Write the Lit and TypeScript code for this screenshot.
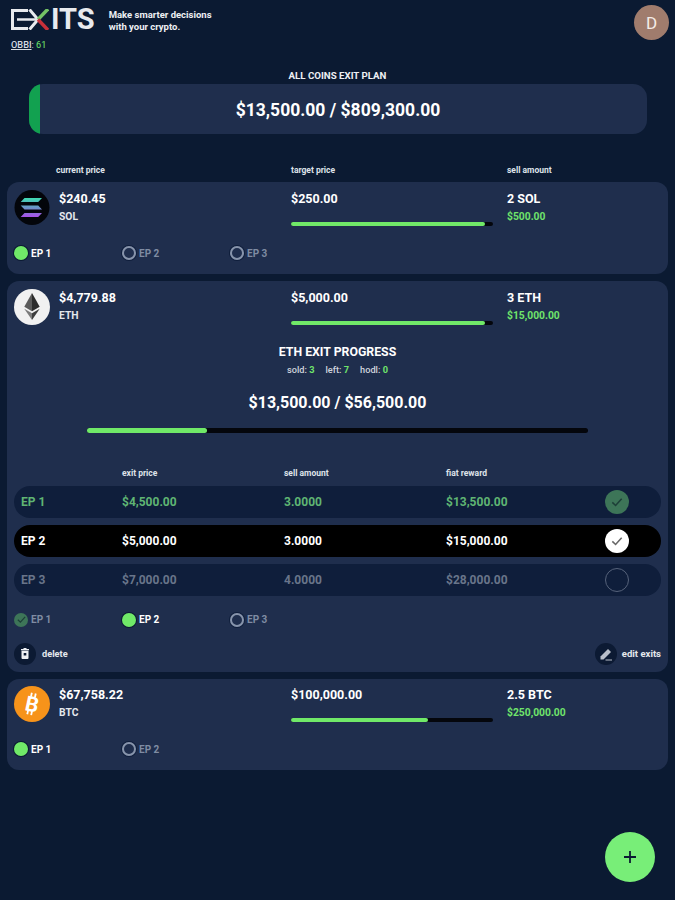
import { LitElement, html, css, svg } from 'lit';
import { customElement } from 'lit/decorators.js';

type Pick = { label: string; state: 'on' | 'off' | 'done' };
type Coin = {
  icon: 'sol' | 'eth' | 'btc';
  price: string;
  symbol: string;
  target: string;
  amount: string;
  reward: string;
  progress: number;
  picks: Pick[];
};

const sol: Coin = {
  icon: 'sol', price: '$240.45', symbol: 'SOL', target: '$250.00', amount: '2 SOL', reward: '$500.00', progress: 96,
  picks: [{ label: 'EP 1', state: 'on' }, { label: 'EP 2', state: 'off' }, { label: 'EP 3', state: 'off' }],
};
const eth: Coin = {
  icon: 'eth', price: '$4,779.88', symbol: 'ETH', target: '$5,000.00', amount: '3 ETH', reward: '$15,000.00', progress: 96,
  picks: [{ label: 'EP 1', state: 'done' }, { label: 'EP 2', state: 'on' }, { label: 'EP 3', state: 'off' }],
};
const btc: Coin = {
  icon: 'btc', price: '$67,758.22', symbol: 'BTC', target: '$100,000.00', amount: '2.5 BTC', reward: '$250,000.00', progress: 68,
  picks: [{ label: 'EP 1', state: 'on' }, { label: 'EP 2', state: 'off' }],
};

const exits = [
  { cls: 'sold', ep: 'EP 1', price: '$4,500.00', amount: '3.0000', reward: '$13,500.00' },
  { cls: 'current', ep: 'EP 2', price: '$5,000.00', amount: '3.0000', reward: '$15,000.00' },
  { cls: 'future', ep: 'EP 3', price: '$7,000.00', amount: '4.0000', reward: '$28,000.00' },
];

const coinIcons = {
  sol: svg`<svg viewBox="0 0 36 36" width="36" height="36">
    <defs><linearGradient id="sg" gradientUnits="userSpaceOnUse" x1="0" y1="8" x2="0" y2="28">
      <stop offset="0" stop-color="#3fdcb2"/><stop offset=".5" stop-color="#6d90c8"/><stop offset="1" stop-color="#b048ec"/></linearGradient></defs>
    <circle cx="18" cy="17.500" r="17.500" fill="#03050a"/>
    <path fill="url(#sg)" d="M10.500 8h17.500l-3.800 4h-17.500zM6.700 15.500h17.500l3.800 4h-17.500zM10.500 23h17.500l-3.800 4h-17.500z"/>
  </svg>`,
  eth: svg`<svg viewBox="0 0 36 36" width="36" height="36">
    <circle cx="18" cy="18" r="18" fill="#f1f1f1"/>
    <path fill="#5b5b5b" d="M18 4 10.300 17.800 18 22.300z"/>
    <path fill="#2c2c2c" d="M18 4 25.700 17.800 18 22.300z"/>
    <path fill="#7b7b7b" d="M10.300 19.800 18 31V24.300z"/>
    <path fill="#3d3d3d" d="M25.700 19.800 18 31V24.300z"/>
  </svg>`,
  btc: svg`<svg viewBox="0 0 36 36" width="36" height="36">
    <circle cx="18" cy="18" r="18" fill="#f7931a"/>
    <g transform="rotate(12 18 18)">
      <path stroke="#fff" stroke-width="1.800" d="M15.500 7v4M19.500 7v4M15.500 25v4M19.500 25v4"/>
      <text x="18" y="25.500" text-anchor="middle" class="btc-b">B</text>
    </g>
  </svg>`,
};

const check = (color: string, size = 12) => html`<svg viewBox="0 0 12 12" width=${size} height=${size}>
  <path d="M2 6.300 4.800 9 10 3.200" fill="none" stroke=${color} stroke-width="1.300"/></svg>`;

@customElement('app-root')
export class AppRoot extends LitElement {
  static styles = css`
    :host {
      display: block;
      position: relative;
      width: 675px;
      min-height: 900px;
      background: #0b1a32;
      color: #fff;
      font-family: Roboto, 'Liberation Sans', sans-serif;
      overflow: hidden;
    }

    .header { display: flex; justify-content: space-between; height: 69px; padding: 4px 6px 0 11px; box-sizing: border-box; }
    .brand-top { display: flex; align-items: flex-start; gap: 14px; height: 29px; }
    .logo { display: flex; align-items: center; gap: 2px; height: 31px; color: #e8eaee; }
    .logo svg { display: block; }
    .logo span { font-size: 29px; font-weight: 700; line-height: 31px; }
    .tag { font-size: 9.500px; font-weight: 700; line-height: 11.500px; margin-top: 5px; color: #eef0f4; }
    .obbi { font-size: 9.200px; margin-top: 6px; color: #d7dbe2; }
    .obbi u { font-weight: 500; }
    .green { color: #6fe46b; }
    .avatar { width: 35px; height: 35px; margin-top: 1px; border-radius: 50%; background: #a07c6d; color: #f4ece8; font-size: 17px; display: flex; align-items: center; justify-content: center; }

    .plan-title { text-align: center; font-size: 9.700px; font-weight: 700; line-height: 14px; color: #eef0f4; margin-bottom: 1px; }
    .plan { height: 50px; margin: 0 28px 0 29px; border-radius: 14px; background: #1f2e4d; overflow: hidden; display: flex; align-items: center; }
    .plan-edge { width: 11px; height: 100%; background: #12a150; flex: none; }
    .plan-sum { flex: 1; text-align: center; font-size: 17.500px; font-weight: 700; padding: 2px 11px 0 0; }

    .columns { display: flex; margin-top: 30px; padding-left: 56px; height: 12px; font-size: 8.500px; font-weight: 700; line-height: 12px; color: #dfe3ea; }
    .columns span:nth-child(1) { width: 235px; }
    .columns span:nth-child(2) { width: 216px; }

    .cards { display: flex; flex-direction: column; gap: 7px; margin: 6px 7px 0; }
    .card { background: #1f2e4d; border-radius: 12px; padding: 8px 7px 11px; }
    .card.full { padding-bottom: 7px; margin-bottom: 0.500px; }
    .card.tight { padding: 7px 7px 11px; }
    .top { display: grid; grid-template-columns: 45px 232px 216px 1fr; height: 40px; }
    .icon { width: 36px; height: 36px; }
    .icon svg { display: block; }
    .btc-b { font-size: 21px; font-weight: 700; fill: #fff; }
    .val { font-size: 12.500px; font-weight: 700; line-height: 18px; }
    .sub { font-size: 10.300px; font-weight: 700; line-height: 18px; color: #e4e7ec; }
    .sub.green { color: #6fe46b; }
    .bar { height: 4px; border-radius: 2px; background: #04060c; width: 202px; margin-top: 14px; }
    .bar > div { height: 100%; border-radius: 2px; background: #70e968; }

    .picks { display: grid; grid-template-columns: repeat(3, 108px); margin-top: 13px; height: 20px; align-items: center; }
    .pick { display: flex; align-items: center; gap: 3px; font-size: 10px; font-weight: 700; color: #7f8ca3; }
    .dot { width: 14px; height: 14px; border-radius: 50%; box-sizing: border-box; display: flex; align-items: center; justify-content: center; flex: none; }
    .pick.on { color: #fff; }
    .pick.on .dot { background: #70e968; box-shadow: 0 0 0 1px #0b1a32; }
    .pick.off .dot { border: 2px solid #8794ab; box-shadow: 0 0 0 1px #0f1e3b; }
    .pick.done .dot { background: #3d7558; }

    .detail { text-align: center; padding-top: 12.500px; }
    .detail h2 { margin: 0; font-size: 12.300px; font-weight: 700; line-height: 20px; }
    .stats { display: flex; justify-content: center; gap: 11px; font-size: 9.200px; font-weight: 500; color: #cfd4dd; line-height: 14px; margin-top: 1px; }
    .total { font-size: 16px; font-weight: 700; line-height: 22px; margin-top: 15px; }
    .total-bar { height: 5px; width: 501px; margin: 14px 0 0 73px; background: #04060c; border-radius: 3px; }
    .total-bar > div { height: 100%; background: #70e968; border-radius: 3px; }

    .table { margin-top: 34px; text-align: left; }
    .grid { display: grid; align-items: center; }
    .thead { grid-template-columns: 108px 162px 162px 1fr; height: 12px; font-size: 8.500px; font-weight: 700; color: #dfe3ea; }
    .rows { display: flex; flex-direction: column; gap: 7px; margin-top: 7px; }
    .row { grid-template-columns: 101px 162px 162px 1fr 60px; height: 32px; border-radius: 16px; padding-left: 7px; font-size: 12px; font-weight: 700; background: #0f1e3b; }
    .row.sold { color: #5fb573; }
    .row.current { background: #000; color: #fff; }
    .row.future { color: #69758a; }
    .mark { width: 24px; height: 24px; border-radius: 50%; box-sizing: border-box; display: flex; align-items: center; justify-content: center; margin-left: 4px; }
    .sold .mark { background: #3d7558; }
    .current .mark { background: #fff; }
    .future .mark { border: 1px solid #56627a; }

    .detail-picks { margin-top: 14px; }
    .actions { display: flex; justify-content: space-between; margin-top: 13px; }
    .action { display: flex; align-items: center; gap: 6px; font-size: 9.200px; font-weight: 700; color: #e6e9ee; }
    .action + .action { font-size: 9.500px; gap: 5px; }
    .round { width: 22px; height: 22px; border-radius: 50%; background: #0c1a33; display: flex; align-items: center; justify-content: center; }
    .round svg { display: block; }

    .fab { position: absolute; left: 605px; top: 832px; width: 50px; height: 50px; border-radius: 50%; background: #78ee78; display: flex; align-items: center; justify-content: center; }
  `;

  renderPicks(picks: Pick[], extra = '') {
    return html`<div class="picks ${extra}">
      ${picks.map(p => html`<div class="pick ${p.state}">
        <div class="dot">${p.state === 'done' ? check('#1d3f38', 11) : ''}</div>${p.label}
      </div>`)}
    </div>`;
  }

  renderTop(c: Coin) {
    return html`<div class="top">
      <div class="icon">${coinIcons[c.icon]}</div>
      <div><div class="val">${c.price}</div><div class="sub">${c.symbol}</div></div>
      <div><div class="val">${c.target}</div><div class="bar"><div style="width:${c.progress}%"></div></div></div>
      <div><div class="val">${c.amount}</div><div class="sub green">${c.reward}</div></div>
    </div>`;
  }

  renderDetail() {
    return html`<div class="detail">
      <h2>ETH EXIT PROGRESS</h2>
      <div class="stats">
        <span>sold: <b class="green">3</b></span><span>left: <b class="green">7</b></span><span>hodl: <b class="green">0</b></span>
      </div>
      <div class="total">$13,500.00 / $56,500.00</div>
      <div class="total-bar"><div style="width:24%"></div></div>
      <div class="table">
        <div class="grid thead"><span></span><span>exit price</span><span>sell amount</span><span>fiat reward</span></div>
        <div class="rows">
          ${exits.map(r => html`<div class="row grid ${r.cls}">
            <span>${r.ep}</span><span>${r.price}</span><span>${r.amount}</span><span>${r.reward}</span>
            <div class="mark">${r.cls === 'sold' ? check('#1d3f38', 14) : r.cls === 'current' ? check('#666', 14) : ''}</div>
          </div>`)}
        </div>
      </div>
    </div>`;
  }

  render() {
    return html`
      <div class="header">
        <div>
          <div class="brand-top">
            <div class="logo">
              <svg width="38" height="21" viewBox="0 0 38 21">
                <path d="M17 1.500H1.500V19.500H17" fill="none" stroke="#e8eaee" stroke-width="3"/>
                <path d="M6 10.500H26" stroke="#e8eaee" stroke-width="2.500"/>
                <path d="M18.500 0.500 27 10.500 18.500 20.500" fill="none" stroke="#e8eaee" stroke-width="3"/>
                <path d="M37 0 27 10.500" stroke="#74c265" stroke-width="3.500"/>
                <path d="M37 21 27 10.500" stroke="#c8303a" stroke-width="3.500"/>
              </svg>
              <span>ITS</span>
            </div>
            <div class="tag">Make smarter decisions<br />with your crypto.</div>
          </div>
          <div class="obbi"><u>OBBI</u>: <span class="green">61</span></div>
        </div>
        <div class="avatar">D</div>
      </div>

      <div class="plan-title">ALL COINS EXIT PLAN</div>
      <div class="plan">
        <div class="plan-edge"></div>
        <div class="plan-sum">$13,500.00 / $809,300.00</div>
      </div>

      <div class="columns">
        <span>current price</span><span>target price</span><span>sell amount</span>
      </div>

      <div class="cards">
        <div class="card">${this.renderTop(sol)}${this.renderPicks(sol.picks)}</div>
        <div class="card full">
          ${this.renderTop(eth)}
          ${this.renderDetail()}
          ${this.renderPicks(eth.picks, 'detail-picks')}
          <div class="actions">
            <div class="action">
              <div class="round"><svg width="8" height="11" viewBox="0 0 8 11"><path fill="#eef0f4" fill-rule="evenodd" d="M2.500 0h3v1H8v1.200H0V1h2.500zM.5 2.800h7V10a1 1 0 0 1-1 1h-5a1 1 0 0 1-1-1zM2.700 5v2.500h2.600V5z"/></svg></div>
              delete
            </div>
            <div class="action">
              <div class="round"><svg width="14" height="14" viewBox="0 0 14 14"><path fill="#b9bfca" d="M1.500 9.500 9 2l3 3-7.500 7.500h-3z"/><path d="M6.500 13h6.500" stroke="#b9bfca"/></svg></div>
              edit exits
            </div>
          </div>
        </div>
        <div class="card tight">${this.renderTop(btc)}${this.renderPicks(btc.picks)}</div>
      </div>

      <div class="fab">
        <svg width="14" height="14" viewBox="0 0 14 14"><path d="M7 1v12M1 7h12" stroke="#0b1a32" stroke-width="1.800"/></svg>
      </div>
    `;
  }
}
